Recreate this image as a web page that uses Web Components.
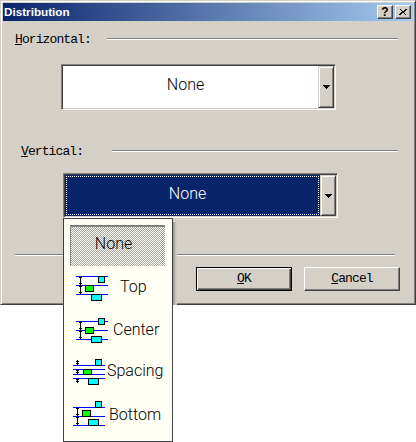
<!DOCTYPE html>
<html>
<head>
<meta charset="utf-8">
<title>Distribution</title>
<style>
html, body { margin: 0; padding: 0; background: #fff; }
body { position: relative; width: 416px; height: 442px; overflow: hidden; }
</style>
</head>
<body>
<dist-dialog heading="Distribution">
    <group-line key="H" rest="orizontal:" style="--left:12px;--gap:16px"></group-line>
    <combo-box style="margin:18px 0 0 58px;height:46px">None</combo-box>
    <group-line key="V" rest="ertical:" style="margin-top:34px;--left:18px;--gap:29px"></group-line>
    <combo-box selected style="margin:15px 0 0 60px;height:45px">None</combo-box>
    <div style="margin:36px 0 0 12px;width:380px;height:1px;background:#808080;border-bottom:1px solid #fff"></div>
    <div style="margin:11px 13px 0 0;display:flex;justify-content:flex-end;gap:12px">
        <dlg-button key="O" rest="K" default></dlg-button>
        <dlg-button key="C" rest="ancel"></dlg-button>
    </div>
</dist-dialog>
<dist-menu>
    <menu-item kind="none">None</menu-item>
    <menu-item kind="top" style="height:42px;--gap:10px">Top</menu-item>
    <menu-item kind="center" style="height:44px;--gap:3px">Center</menu-item>
    <menu-item kind="spacing" style="height:38px;--gap:-3px">Spacing</menu-item>
    <menu-item kind="bottom" style="height:50px;--gap:-1px">Bottom</menu-item>
</dist-menu>
<script>
(function () {
    const MONO = `13px/14px "Liberation Mono", monospace`;
    const THIN = `300 16px Roboto, "Liberation Sans", sans-serif`;

    class DistDialog extends HTMLElement {
        constructor() {
            super();
            let root = this.attachShadow({ mode: "open" });
            root.innerHTML = `
            <style>
            :host {
                display: block;
                box-sizing: border-box;
                width: 416px;
                height: 305px;
                padding: 2px;
                background: #d4d0c8;
                border: 1px solid;
                border-color: #d4d0c8 #404040 #404040 #d4d0c8;
                box-shadow: inset 1px 1px #fff, inset -1px -1px #808080;
            }
            .title {
                display: flex;
                align-items: center;
                height: 18px;
                padding: 0 2px 0 1px;
                background: linear-gradient(to right, #0a246a, #a6caf0);
                color: #fff;
                font: bold 11.7px "Liberation Sans", sans-serif;
            }
            .title span { flex: 1; padding-bottom: 2px; }
            .cap {
                box-sizing: border-box;
                width: 16px;
                height: 14px;
                margin-left: 2px;
                display: flex;
                align-items: center;
                justify-content: center;
                background: #d4d0c8;
                color: #000;
                border: 1px solid;
                border-color: #fff #404040 #404040 #fff;
                box-shadow: inset -1px -1px #808080;
                font: bold 12px "Liberation Sans", sans-serif;
            }
            </style>
            <div class="title">
                <span id="heading"></span>
                <div class="cap">?</div>
                <div class="cap"><svg width="8" height="7" viewBox="0 0 8 7" shape-rendering="crispEdges"><path d="M0 0h2v1h1v1h2v-1h1v-1h2v1h-1v1h-1v1h-1v1h1v1h1v1h1v-0h-2v-1h-1v-1h-2v1h-1v1h-2v-1h1v-1h1v-1h1v-1h-1v-1h-1v-1h-1z" fill="#000"/></svg></div>
            </div>
            <slot></slot>
            `;
            root.getElementById("heading").textContent = this.getAttribute("heading");
        }
    }
    customElements.define("dist-dialog", DistDialog);

    class GroupLine extends HTMLElement {
        constructor() {
            super();
            let root = this.attachShadow({ mode: "open" });
            root.innerHTML = `
            <style>
            :host {
                display: flex;
                align-items: center;
                height: 14px;
                margin: 11px 15px 0 var(--left, 12px);
                font: ${MONO};
                letter-spacing: -0.9px;
                color: #000;
            }
            .text { padding-top: 2px; }
            .line {
                flex: 1;
                height: 1px;
                margin-left: var(--gap, 16px);
                background: #808080;
                border-bottom: 1px solid #fff;
            }
            </style>
            <span class="text"><u id="key"></u><span id="rest"></span></span>
            <div class="line"></div>
            `;
            root.getElementById("key").textContent = this.getAttribute("key");
            root.getElementById("rest").textContent = this.getAttribute("rest");
        }
    }
    customElements.define("group-line", GroupLine);

    class ComboBox extends HTMLElement {
        constructor() {
            super();
            let root = this.attachShadow({ mode: "open" });
            root.innerHTML = `
            <style>
            :host {
                display: flex;
                box-sizing: border-box;
                width: 275px;
                padding: 1px;
                background: #d4d0c8;
                border: 1px solid;
                border-color: #808080 #fff #fff #808080;
                box-shadow: inset 1px 1px #404040, inset -1px -1px #d4d0c8;
                font: ${THIN};
            }
            .field {
                flex: 1;
                display: flex;
                align-items: center;
                justify-content: center;
                box-sizing: border-box;
                padding: 0 10px 5px 0;
                background: #fff;
                color: #000;
            }
            :host([selected]) .field {
                background: #0a246a;
                color: #fff;
                border: 1px dotted #fff;
                box-shadow: 0 0 0 1px #0a246a;
                margin: 1px 1px 1px 1px;
            }
            .btn {
                box-sizing: border-box;
                width: 16px;
                display: flex;
                align-items: center;
                justify-content: center;
                background: #d4d0c8;
                border: 1px solid;
                border-color: #d4d0c8 #404040 #404040 #d4d0c8;
                box-shadow: inset 1px 1px #fff, inset -1px -1px #808080;
            }
            </style>
            <div class="field"><slot></slot></div>
            <div class="btn"><svg width="7" height="4" viewBox="0 0 7 4" shape-rendering="crispEdges"><path d="M0 0h7v1h-1v1h-1v1h-1v1h-1v-1h-1v-1h-1v-1h-1z" fill="#000"/></svg></div>
            `;
        }
    }
    customElements.define("combo-box", ComboBox);

    class DlgButton extends HTMLElement {
        constructor() {
            super();
            let root = this.attachShadow({ mode: "open" });
            root.innerHTML = `
            <style>
            :host {
                display: flex;
                align-items: center;
                justify-content: center;
                box-sizing: border-box;
                width: 96px;
                height: 24px;
                background: #d4d0c8;
                color: #000;
                border: 1px solid;
                border-color: #fff #404040 #404040 #fff;
                box-shadow: inset -1px -1px #808080;
                font: ${MONO};
                letter-spacing: -0.9px;
            }
            :host([default]) {
                border-color: #000;
                box-shadow: inset 1px 1px #fff, inset -1px -1px #404040, inset -2px -2px #808080;
            }
            </style>
            <span><u id="key"></u><span id="rest"></span></span>
            `;
            root.getElementById("key").textContent = this.getAttribute("key");
            root.getElementById("rest").textContent = this.getAttribute("rest");
        }
    }
    customElements.define("dlg-button", DlgButton);

    class DistMenu extends HTMLElement {
        constructor() {
            super();
            let root = this.attachShadow({ mode: "open" });
            root.innerHTML = `
            <style>
            :host {
                position: absolute;
                left: 63px;
                top: 218px;
                box-sizing: border-box;
                width: 110px;
                height: 224px;
                padding-top: 6px;
                background: #fffff6;
                border: 1px solid #404040;
                font: ${THIN};
                color: #000;
            }
            .shade {
                position: absolute;
                left: 109px;
                top: 3px;
                width: 4px;
                height: 83px;
                background: linear-gradient(to right, #8f8c86, #c2beb7 60%, #d4d0c8);
            }
            </style>
            <div class="shade"></div>
            <slot></slot>
            `;
        }
    }
    customElements.define("dist-menu", DistMenu);

    function box(x, y, w, h, fill) {
        return `<rect x="${x + 0.5}" y="${y + 0.5}" width="${w}" height="${h}" fill="${fill}" stroke="#000"/>`;
    }
    function lines(x, ys) {
        return ys.map(y => `<path d="M${x} ${y + 0.5}h32" stroke="#00f"/>`).join("");
    }
    // vertical dimension arrow with small heads at both ends
    function beam(x, y1, y2) {
        return `<path d="M${x + 0.5} ${y1}V${y2}M${x - 1} ${y1 + 1.5}h3M${x - 1} ${y2 - 1.5}h3" stroke="#000"/>`;
    }
    const CYAN = "#00ffff", GREEN = "#00ff00";
    const ICONS = {
        top: lines(4, [4, 13, 22]) + beam(8, 4, 13) + beam(8, 13, 22) +
            box(26, 4, 6, 6, CYAN) + box(13, 13, 8, 6, GREEN) + box(19, 22, 10, 6, CYAN),
        center: lines(4, [6, 15, 24]) + beam(8, 6, 15) + beam(8, 15, 24) +
            box(26, 3, 6, 6, CYAN) + box(13, 12, 8, 6, GREEN) + box(19, 21, 10, 6, CYAN),
        spacing: lines(1, [9, 13, 18, 22]) + beam(5, 4, 9) + beam(5, 13, 18) + beam(5, 22, 27) +
            box(23, 3, 6, 6, CYAN) + box(11, 13, 8, 5, GREEN) + box(16, 22, 10, 6, CYAN),
        bottom: lines(1, [7, 16, 25]) + beam(5, 7, 16) + beam(5, 16, 25) +
            box(23, 1, 6, 6, CYAN) + box(10, 10, 8, 6, GREEN) + box(16, 19, 10, 6, CYAN)
    };

    class MenuItem extends HTMLElement {
        constructor() {
            super();
            let root = this.attachShadow({ mode: "open" });
            let kind = this.getAttribute("kind");
            let icon = ICONS[kind] ?
                `<svg width="38" height="30" viewBox="0 0 38 30" shape-rendering="crispEdges">${ICONS[kind]}</svg>` : "";
            root.innerHTML = `
            <style>
            :host {
                display: flex;
                align-items: center;
                box-sizing: border-box;
                padding-left: 8px;
            }
            :host([kind="none"]) {
                justify-content: center;
                width: 95px;
                height: 41px;
                margin-left: 6px;
                padding: 0 9px 4px 0;
                border-top: 2px solid #808080;
                border-left: 1px solid #808080;
                background: conic-gradient(#a4a4a0 25%, #fffff6 0 50%, #a4a4a0 0 75%, #fffff6 0) 0 0 / 2px 2px;
            }
            svg { flex: none; }
            span { margin-left: var(--gap, 0); padding-bottom: 2px; }
            </style>
            ${icon}<span><slot></slot></span>
            `;
        }
    }
    customElements.define("menu-item", MenuItem);
})();
</script>
</body>
</html>
